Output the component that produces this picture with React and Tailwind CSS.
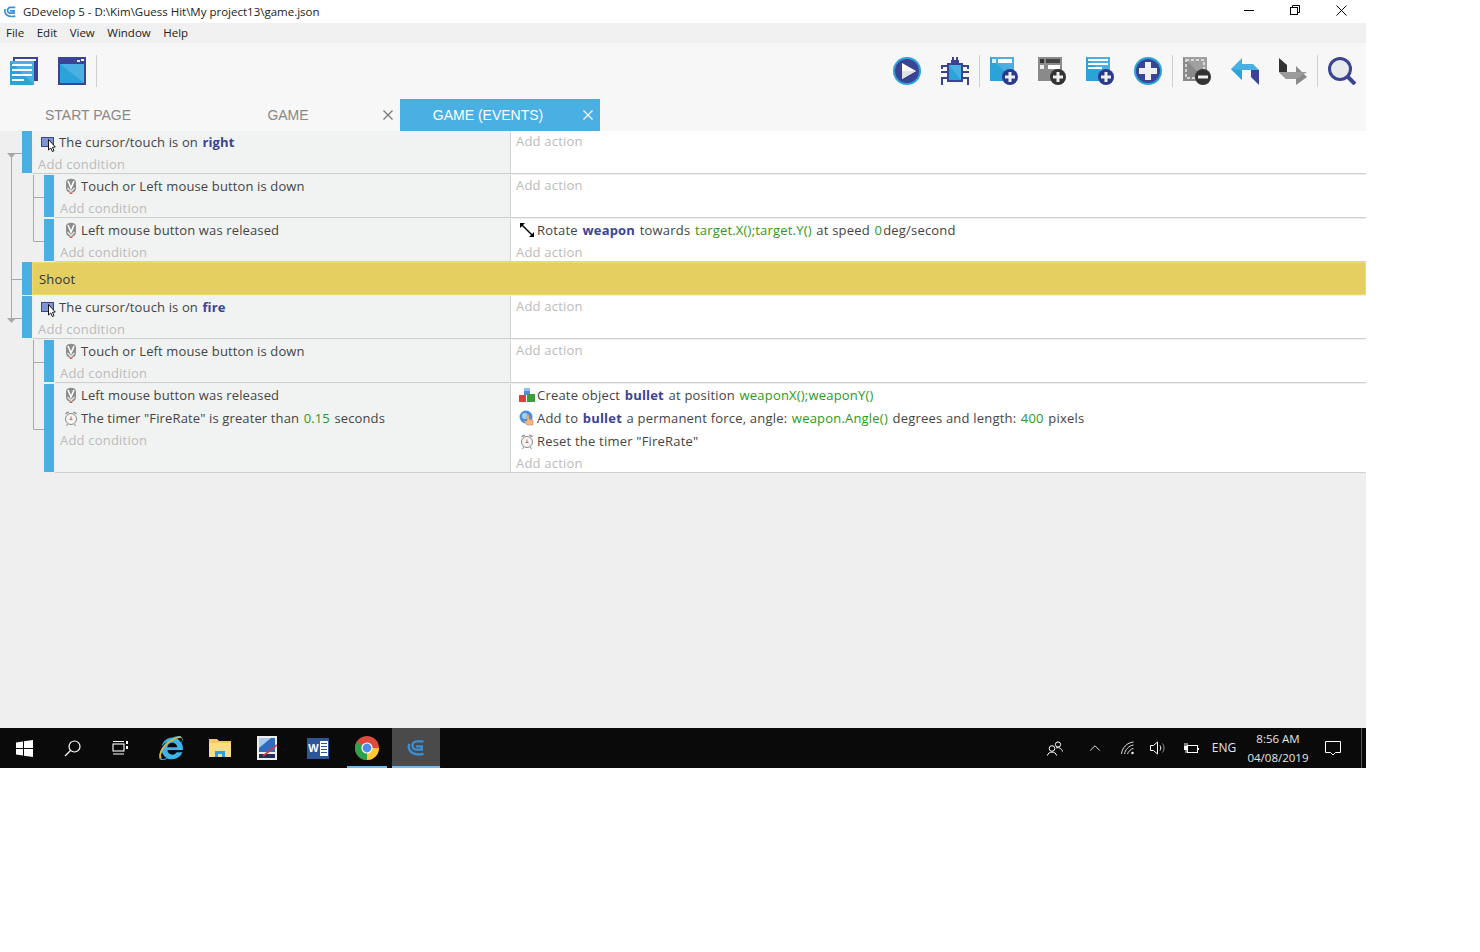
import { ChevronUp } from "lucide-react";
import { FaInternetExplorer } from "react-icons/fa";

const NAVY = "#3b4494";
const BLUE = "#29a3d8";
const SKY = "#4ab0e4";

function GdLogo({ size = 14, color = "#3b8fd6" }) {
  return (
    <svg width={size} height={size} viewBox="0 0 24 24" fill="none" stroke={color} strokeWidth="2.8">
      <path d="M4 7 C1 15 8 22 21 19" />
      <path d="M21 4 H13 C6 4 6 14 13 14 H19 V10 H12" />
    </svg>
  );
}

/* toolbar icons, drawn on a 28 box */
function PlayIcon() {
  return (
    <svg width="28" height="28" viewBox="0 0 28 28">
      <circle cx="14" cy="14" r="14" fill={BLUE} />
      <circle cx="14" cy="14" r="12" fill={NAVY} />
      <path d="M9 6 L23 14 L9 22 Z" fill="#fff" />
      <path d="M9 14 H23 L9 22 Z" fill="#dfe3e8" />
    </svg>
  );
}

function BugIcon() {
  return (
    <svg width="28" height="28" viewBox="0 0 28 28">
      <g fill="none" stroke={NAVY} strokeWidth="2">
        <path d="M12 0 V5 M16 0 V5" />
        <path d="M6 9 H1 V12 M6 15 H0 M6 21 H1 V28" />
        <path d="M22 9 H27 V12 M22 15 H28 M22 21 H27 V28" />
      </g>
      <rect x="10" y="3" width="8" height="3" fill={NAVY} />
      <rect x="6" y="6" width="16" height="19" fill={NAVY} />
      <rect x="8" y="8" width="12" height="15" fill={BLUE} />
      <path d="M8 8 h12 v15z" fill={SKY} />
    </svg>
  );
}

function Badge({ bg, minus }) {
  return (
    <g>
      <circle cx="20" cy="20" r="8" fill={bg} />
      <rect x="15" y="18.5" width="10" height="3" fill="#eef0f2" />
      {!minus && <rect x="18.5" y="15" width="3" height="10" fill="#eef0f2" />}
    </g>
  );
}

function SceneAddIcon() {
  return (
    <svg width="28" height="28" viewBox="0 0 28 28">
      <rect x="0" y="0" width="24" height="24" fill={BLUE} />
      <path d="M0 0 h24 v24z" fill={SKY} />
      <rect x="2" y="2" width="4" height="4" fill="#dfeefa" />
      <rect x="8" y="2" width="14" height="4" fill="#fff" />
      <Badge bg="#2b3a8f" />
    </svg>
  );
}

function ExternalAddIcon() {
  return (
    <svg width="28" height="28" viewBox="0 0 28 28">
      <rect x="0" y="0" width="24" height="24" fill="#8a8a8a" />
      <rect x="2" y="2" width="4" height="4" fill="#333" />
      <rect x="8" y="2" width="14" height="4" fill="#444" />
      <rect x="2" y="8" width="4" height="4" fill="#eee" />
      <rect x="10" y="8" width="12" height="4" fill="#fff" />
      <Badge bg="#333" />
    </svg>
  );
}

function ListAddIcon() {
  return (
    <svg width="28" height="28" viewBox="0 0 28 28">
      <rect x="0" y="0" width="24" height="24" fill={BLUE} />
      <path d="M0 0 h24 v24z" fill={SKY} />
      <rect x="2" y="2" width="20" height="2" fill="#fff" />
      <rect x="2" y="6" width="20" height="2" fill="#fff" />
      <rect x="2" y="10" width="14" height="2" fill="#fff" />
      <Badge bg="#2b3a8f" />
    </svg>
  );
}

function PlusCircleIcon() {
  return (
    <svg width="28" height="28" viewBox="0 0 28 28">
      <circle cx="14" cy="14" r="14" fill={BLUE} />
      <circle cx="14" cy="14" r="12" fill={NAVY} />
      <path d="M11 5 h6 v6 h6 v6 h-6 v6 h-6 v-6 h-6 v-6 h6z" fill="#eef0f2" />
    </svg>
  );
}

function DeleteIcon() {
  return (
    <svg width="28" height="28" viewBox="0 0 28 28">
      <rect x="0" y="0" width="24" height="24" fill="#8a8a8a" />
      <path d="M0 0 h24 v24z" fill="#a0a0a0" />
      <rect x="3" y="3" width="18" height="18" fill="none" stroke="#eee" strokeWidth="1.5" strokeDasharray="3 2" />
      <Badge bg="#333" minus />
    </svg>
  );
}

function UndoIcon() {
  return (
    <svg width="28" height="28" viewBox="0 0 28 28">
      <path d="M0 12 L11 1 V7 H22 L28 13 H11 V23 Z" fill={SKY} />
      <path d="M0 12 L11 23 V13 Z" fill={BLUE} />
      <path d="M20 13 H28 V28 L20 20 Z" fill={NAVY} />
    </svg>
  );
}

function RedoIcon() {
  return (
    <svg width="28" height="28" viewBox="0 0 28 28">
      <path d="M0 1 L8 8 V15 H0 Z" fill="#333" />
      <path d="M0 15 H17 V9 L28 20 L17 28 V22 H7 Z" fill="#8a8a8a" />
      <path d="M17 22 H7 L0 15 H28 Z" fill="#9b9b9b" />
    </svg>
  );
}

function SearchIcon() {
  return (
    <svg width="28" height="28" viewBox="0 0 28 28">
      <circle cx="12" cy="12" r="10.5" fill="#e8e9eb" stroke={NAVY} strokeWidth="3" />
      <path d="M19 19 L27 27" stroke={NAVY} strokeWidth="4" />
    </svg>
  );
}

function DocsIcon() {
  return (
    <svg width="28" height="28" viewBox="0 0 28 28">
      <rect x="3" y="0" width="25" height="24" fill={NAVY} />
      <rect x="5" y="2" width="21" height="2" fill="#fff" />
      <rect x="0" y="4" width="24" height="24" fill={BLUE} />
      <path d="M0 4 h24 v24z" fill={SKY} />
      <rect x="2" y="7" width="20" height="2" fill="#fff" />
      <rect x="2" y="12" width="20" height="2" fill="#fff" />
      <rect x="2" y="17" width="20" height="2" fill="#fff" />
      <rect x="2" y="22" width="12" height="2" fill="#fff" />
    </svg>
  );
}

function SceneIcon() {
  return (
    <svg width="28" height="28" viewBox="0 0 28 28">
      <rect x="0" y="0" width="28" height="28" fill={NAVY} />
      <rect x="2" y="7" width="24" height="19" fill={BLUE} />
      <path d="M2 7 h24 v19z" fill={SKY} />
      <rect x="19" y="3" width="3" height="2" fill="#dfeefa" />
      <rect x="23" y="2" width="3" height="2" fill="#fff" />
    </svg>
  );
}

/* event sheet icons, 16 box */
function CursorIcon() {
  return (
    <svg width="16" height="16" viewBox="0 0 16 16" className="overflow-visible">
      <rect x="0.5" y="3.5" width="12" height="9" fill="#7d93d2" stroke={NAVY} />
      <path d="M7.5 5.5 V16 L9.8 14 L11.3 17.5 L13 16.7 L11.5 13.3 L14.3 13 Z" fill="#fff" stroke="#000" strokeWidth="0.9" />
    </svg>
  );
}

function MouseIcon() {
  return (
    <svg width="16" height="16" viewBox="0 0 16 16">
      <path d="M3 4 C3 -0.5 13 -0.5 13 4 V10 C13 13 11 14.5 8 14.5 C5 14.5 3 13 3 10 Z" fill="#8c8c8c" />
      <path d="M5 3 L8 10 L11 3" fill="none" stroke="#fff" strokeWidth="1.6" />
      <path d="M4.5 10 L8 13.5 L11.5 10" fill="none" stroke="#e6e6e6" strokeWidth="1.4" />
      <path d="M6 14.5 h4 l-1 1.5 h-2z" fill="#e2574c" />
    </svg>
  );
}

function TimerIcon() {
  return (
    <svg width="16" height="16" viewBox="0 0 16 16" fill="none">
      <circle cx="8" cy="9" r="5.5" fill="#f5f5f5" stroke="#8c8c8c" />
      <path d="M8 6.5 V9.5 M6.5 9.5 H9.5" stroke="#c96a5c" />
      <path d="M2.5 4 C3 2 5 1.5 6 2.5 Z M13.5 4 C13 2 11 1.5 10 2.5 Z" fill="#bbb" stroke="#8c8c8c" strokeWidth="0.7" />
      <path d="M4.5 14 L3.5 16 M11.5 14 L12.5 16" stroke="#8c8c8c" />
    </svg>
  );
}

function RotateIcon() {
  return (
    <svg width="16" height="16" viewBox="0 0 16 16" stroke="#000" strokeWidth="1.4" fill="#000">
      <path d="M2 2 L14 14" />
      <path d="M1 1 H6 L1 6 Z M15 15 H10 L15 10 Z" stroke="none" />
    </svg>
  );
}

function CreateIcon() {
  return (
    <svg width="16" height="16" viewBox="0 0 16 16">
      <rect x="5" y="1" width="6" height="7" fill="#4a90d9" />
      <path d="M5 1 h6 v3 h-6z" fill="#8cc0ee" />
      <rect x="0" y="8" width="7" height="7" fill="#d8403a" />
      <rect x="8" y="7" width="8" height="8" fill="#3f9e3a" />
    </svg>
  );
}

function ForceIcon() {
  return (
    <svg width="16" height="16" viewBox="0 0 16 16" className="overflow-visible">
      <circle cx="7" cy="7" r="6.5" fill="#4f8fd8" />
      <circle cx="6" cy="6" r="3" fill="#a8d0f2" />
      <path d="M8 5 h2 v4 l4 1 v5 h-6 l-3 -4 h3z" fill="#f2b98a" stroke="#c27b45" strokeWidth="0.5" />
    </svg>
  );
}

const ICONS = {
  cursor: CursorIcon,
  mouse: MouseIcon,
  timer: TimerIcon,
  rotate: RotateIcon,
  create: CreateIcon,
  force: ForceIcon,
};

const obj = t => ({ t, k: "obj" });
const num = t => ({ t, k: "num" });

const EVENTS = [
  {
    indent: 0,
    h: "h-[44px]",
    conditions: [{ icon: "cursor", parts: ["The cursor/touch is on ", obj("right")] }],
    actions: [],
  },
  {
    indent: 1,
    h: "h-[44px]",
    conditions: [{ icon: "mouse", parts: ["Touch or Left mouse button is down"] }],
    actions: [],
  },
  {
    indent: 1,
    h: "h-[43px]",
    tight: true,
    conditions: [{ icon: "mouse", parts: ["Left mouse button was released"] }],
    actions: [
      { icon: "rotate", parts: ["Rotate ", obj("weapon"), " towards ", num("target.X();target.Y()"), " at speed ", num("0"), "deg/second"] },
    ],
  },
  { group: "Shoot" },
  {
    indent: 0,
    h: "h-[44px]",
    conditions: [{ icon: "cursor", parts: ["The cursor/touch is on ", obj("fire")] }],
    actions: [],
  },
  {
    indent: 1,
    h: "h-[44px]",
    conditions: [{ icon: "mouse", parts: ["Touch or Left mouse button is down"] }],
    actions: [],
  },
  {
    indent: 1,
    h: "h-[90px]",
    conditions: [
      { icon: "mouse", parts: ["Left mouse button was released"] },
      { icon: "timer", parts: ['The timer "FireRate" is greater than ', num("0.15"), " seconds"] },
    ],
    actions: [
      { icon: "create", parts: ["Create object ", obj("bullet"), " at position ", num("weaponX();weaponY()")] },
      { icon: "force", parts: ["Add to ", obj("bullet"), " a permanent force, angle: ", num("weapon.Angle()"), " degrees and length: ", num("400"), " pixels"] },
      { icon: "timer", parts: ['Reset the timer "FireRate"'] },
    ],
  },
];

function Instruction({ icon, parts }) {
  const Icon = ICONS[icon];
  return (
    <div className="flex items-center h-[22px] mb-px pl-[3px] text-[#444] whitespace-pre">
      <span className="shrink-0 mr-[2px]">
        <Icon />
      </span>
      <span className="pt-[2px] flex">
        {parts.map((p, i) =>
          typeof p === "string" ? (
            <span key={i} className={i > 0 ? "ml-px" : ""}>{p}</span>
          ) : (
            <span key={i} className={`${i > 0 ? "ml-px " : ""}${p.k === "obj" ? "font-bold text-[#3b4494]" : "text-[#2c9a1a]"}`}>
              {p.t}
            </span>
          )
        )}
      </span>
    </div>
  );
}

function EventRow({ ev }) {
  return (
    <div className={`flex ${ev.h} ${ev.indent ? "ml-[44px]" : "ml-[22px]"}`}>
      <div className={`w-[10px] shrink-0 bg-[#4ab0e4] ${ev.tight ? "mb-px" : "mb-[2px]"}`} />
      <div className={`flex flex-1 ml-px border-b border-[#cfcfcf] ${ev.tight ? "" : "mb-px"}`}>
        <div className={`shrink-0 pl-[5px] bg-[#f1f3f3] border-r border-[#d4d4d4] ${ev.indent ? "w-[456px]" : "w-[478px]"}`}>
          <div className="tracking-[0.13px]">
            {ev.conditions.map((c, i) => (
              <Instruction key={i} {...c} />
            ))}
          </div>
          <div className="h-[20px] leading-[20px] text-[#bbbbbb]">Add condition</div>
        </div>
        <div className="flex-1 pl-[5px] bg-white">
          {ev.actions.map((a, i) => (
            <Instruction key={i} {...a} />
          ))}
          <div className="h-[20px] leading-[20px] text-[#bbbbbb]">Add action</div>
        </div>
      </div>
    </div>
  );
}

function TreeLines() {
  return (
    <svg className="absolute left-0 top-0" width="50" height="340" stroke="#a8a8a8" fill="none">
      <path d="M11.5 24 V188 M11.5 22.5 H22 M11.5 148.5 H22 M11.5 187.5 H22" />
      <path d="M33.5 44 V110 M33.5 66.5 H44 M33.5 110.5 H44" />
      <path d="M33.5 209 V298 M33.5 231.5 H44 M33.5 298.5 H44" />
      <path d="M7 22 H16 L11.5 27 Z M7 187 H16 L11.5 192 Z" fill="#a8a8a8" stroke="none" />
    </svg>
  );
}

function ToolButton({ children }) {
  return <div className="w-12 h-7 flex justify-center items-center shrink-0">{children}</div>;
}

const Sep = () => <div className="w-px h-8 bg-[#d0d0d0] shrink-0" />;

function Tab({ label, active, closable }) {
  return (
    <div className={`w-[200px] h-8 flex items-center ${active ? "bg-[#4ab0e4] text-white" : "text-[#888]"}`}>
      <span className="w-[176px] text-center">{label}</span>
      {closable && (
        <svg width="10" height="10" viewBox="0 0 10 10" className="ml-[7px]" stroke={active ? "#fff" : "#777"} strokeWidth="1.2">
          <path d="M0.5 0.5 L9.5 9.5 M9.5 0.5 L0.5 9.5" />
        </svg>
      )}
    </div>
  );
}

function TaskIcon({ children, active, underline }) {
  return (
    <div className={`relative w-12 h-10 flex items-center justify-center shrink-0 ${active ? "bg-[#4a4a4a]" : ""}`}>
      {children}
      {underline && <div className={`absolute bottom-0 h-[2px] bg-[#76b9ed] ${active ? "inset-x-0" : "inset-x-1"}`} />}
    </div>
  );
}

function Taskbar() {
  return (
    <div className="h-10 shrink-0 bg-[#0a0a0a] flex items-center text-white">
      <TaskIcon>
        <svg width="17" height="17" viewBox="0 0 17 17" fill="#fff">
          <path d="M0 2.4 L7 1.4 V8 H0 Z M8 1.3 L17 0 V8 H8 Z M0 9 H7 V15.6 L0 14.6 Z M8 9 H17 V17 L8 15.7 Z" />
        </svg>
      </TaskIcon>
      <TaskIcon>
        <svg width="17" height="17" viewBox="0 0 17 17" fill="none" stroke="#fff" strokeWidth="1.2">
          <circle cx="10.5" cy="6.5" r="5.5" />
          <path d="M6.5 10.5 L1 16" />
        </svg>
      </TaskIcon>
      <TaskIcon>
        <svg width="17" height="16" viewBox="0 0 17 16" fill="none" stroke="#fff" strokeWidth="1.1">
          <rect x="1" y="4" width="11" height="7" />
          <path d="M1 1.5 H12 M1 14 H12" />
          <path d="M15 1 V4 M15 6 V9" strokeWidth="2" />
        </svg>
      </TaskIcon>
      <div className="flex ml-[3px] gap-px">
        <TaskIcon>
          <span className="relative">
            <FaInternetExplorer size={24} color="#3cb4e6" />
            <svg className="absolute left-0 top-0" width="24" height="24" viewBox="0 0 24 24" fill="none" stroke="#e3b52a" strokeWidth="1.4">
              <path d="M2 22 C-1 16 8 3 22 1" />
            </svg>
          </span>
        </TaskIcon>
        <TaskIcon>
          <svg width="22" height="18" viewBox="0 0 22 18">
            <path d="M0 0 H8 L10 2 H22 V18 H0 Z" fill="#f3c95a" />
            <rect x="0" y="4" width="22" height="14" fill="#fbdd83" />
            <path d="M6 18 V12 H16 V18 H13 V15 H9 V18 Z" fill="#2d9fe0" />
          </svg>
        </TaskIcon>
        <TaskIcon>
          <svg width="20" height="24" viewBox="0 0 20 24" className="mr-1">
            <rect width="20" height="24" fill="#eee" />
            <rect x="2" y="2" width="16" height="14" fill="#2f6cc0" />
            <path d="M2 2 H14 L2 12 Z" fill="#a6cdf0" />
            <rect x="2" y="18" width="16" height="4" fill="#222d55" />
            <path d="M20 9 L6 20" stroke="#d43c3c" strokeWidth="1.6" />
          </svg>
        </TaskIcon>
        <TaskIcon>
          <div className="w-[22px] h-[21px] bg-[#2b579a] flex items-center">
            <div className="w-[13px] text-center text-white text-[11px] font-bold font-['Liberation_Sans',sans-serif]">W</div>
            <div className="w-[8px] h-[15px] bg-white flex flex-col justify-around py-px px-px">
              <div className="h-px bg-[#2b579a]" />
              <div className="h-px bg-[#2b579a]" />
              <div className="h-px bg-[#2b579a]" />
              <div className="h-px bg-[#2b579a]" />
            </div>
          </div>
        </TaskIcon>
        <TaskIcon underline>
          <svg width="24" height="24" viewBox="0 0 24 24">
            <circle cx="12" cy="12" r="12" fill="#dd4b3e" />
            <path d="M12 12 L1.6 6 A12 12 0 0 0 12 24 Z" fill="#2fa14a" />
            <path d="M12 12 H24 A12 12 0 0 1 12 24 Z" fill="#fcc934" />
            <circle cx="12" cy="12" r="5.6" fill="#fff" />
            <circle cx="12" cy="12" r="4.4" fill="#4a8ff0" />
          </svg>
        </TaskIcon>
        <TaskIcon active underline>
          <GdLogo size={20} />
        </TaskIcon>
      </div>
      <div className="ml-auto flex items-center h-10 text-xs text-[#e6e6e6]">
        <div className="w-10 flex justify-center">
          <svg width="16" height="15" viewBox="0 0 16 15" fill="none" stroke="#fff">
            <circle cx="5" cy="7.5" r="2.8" />
            <path d="M0.5 14.5 C1 10 9 10 9.5 14.5" />
            <circle cx="11" cy="3.5" r="2.6" />
            <path d="M9 7 C11 6 15 7 15.5 10.5" />
          </svg>
        </div>
        <div className="w-10 flex justify-center">
          <ChevronUp size={18} strokeWidth={1.2} color="#fff" />
        </div>
        <div className="w-[26px] flex justify-center">
          <svg width="14" height="14" viewBox="0 0 14 14" fill="none" stroke="#ddd">
            <path d="M0.5 13 C1 7 6 1.5 12.5 1 M3.5 13 C4 9 8 4.5 12.5 4 M6.5 13 C7 11 10 7.5 12.5 7.5" />
            <circle cx="11.5" cy="12" r="1.2" fill="#fff" stroke="none" />
          </svg>
        </div>
        <div className="w-[34px] flex justify-center">
          <svg width="16" height="14" viewBox="0 0 16 14" fill="none" stroke="#fff">
            <path d="M0.5 4.5 H3.5 L7.5 1 V13 L3.5 9.5 H0.5 Z" />
            <path d="M10 4.5 C11 6 11 8 10 9.5" />
            <path d="M12.5 2.5 C14.5 5 14.5 9 12.5 11.5" stroke="#999" />
          </svg>
        </div>
        <div className="w-8 flex justify-center">
          <svg width="16" height="11" viewBox="0 0 16 11" fill="none" stroke="#fff">
            <rect x="4.5" y="2.5" width="10" height="7" />
            <path d="M15.5 5 V7" />
            <rect x="1" y="3" width="4" height="4" fill="#fff" stroke="none" />
            <path d="M2 0 V3 M4 0 V3 M3 7 V10" />
          </svg>
        </div>
        <div className="w-[34px] text-center">ENG</div>
        <div className="w-[74px] text-center leading-[19px] text-[11.5px]">
          <div>8:56 AM</div>
          <div>04/08/2019</div>
        </div>
        <div className="w-9 flex justify-center">
          <svg width="16" height="15" viewBox="0 0 16 15" fill="none" stroke="#fff">
            <path d="M0.5 0.5 H15.5 V11.5 H10.5 L8 14 L5.5 11.5 H0.5 Z" />
          </svg>
        </div>
        <div className="w-[15px] h-10 flex justify-end pr-[4px]">
          <div className="w-px h-10 bg-[#555]" />
        </div>
      </div>
    </div>
  );
}

export default function App() {
  return (
    <div className="w-[1480px] h-[952px] bg-white overflow-hidden">
      <div className="w-[1366px] h-[768px] flex flex-col font-['Open_Sans','Noto_Sans',sans-serif] text-[13px]">
        <div className="h-[23px] shrink-0 bg-white flex items-center pl-[3px] text-[11.5px] text-[#222]">
          <GdLogo size={14} />
          <span className="ml-[6px]">GDevelop 5 - D:\Kim\Guess Hit\My project13\game.json</span>
          <div className="ml-auto flex items-center mb-[3px]">
            <div className="w-[46px] flex justify-center">
              <div className="w-[10px] h-px bg-black" />
            </div>
            <div className="w-[46px] flex justify-center">
              <svg width="10" height="10" viewBox="0 0 10 10" fill="none" stroke="#000">
                <path d="M2.5 2.5 V0.5 H9.5 V7.5 H7.5" />
                <rect x="0.5" y="2.5" width="7" height="7" />
              </svg>
            </div>
            <div className="w-[46px] flex justify-center mr-[2px]">
              <svg width="11" height="11" viewBox="0 0 11 11" stroke="#000">
                <path d="M0.5 0.5 L10.5 10.5 M10.5 0.5 L0.5 10.5" />
              </svg>
            </div>
          </div>
        </div>

        <div className="h-5 shrink-0 bg-[#f0f0f0] flex items-center pl-[6px] gap-[12.5px] text-[11.5px] text-[#222]">
          <span>File</span>
          <span>Edit</span>
          <span>View</span>
          <span>Window</span>
          <span>Help</span>
        </div>

        <div className="h-[56px] shrink-0 bg-[#f7f7f7] flex items-center">
          <ToolButton><DocsIcon /></ToolButton>
          <ToolButton><SceneIcon /></ToolButton>
          <Sep />
          <div className="ml-auto flex items-center">
            <ToolButton><PlayIcon /></ToolButton>
            <ToolButton><BugIcon /></ToolButton>
            <Sep />
            <ToolButton><SceneAddIcon /></ToolButton>
            <ToolButton><ExternalAddIcon /></ToolButton>
            <ToolButton><ListAddIcon /></ToolButton>
            <ToolButton><PlusCircleIcon /></ToolButton>
            <Sep />
            <ToolButton><DeleteIcon /></ToolButton>
            <ToolButton><UndoIcon /></ToolButton>
            <ToolButton><RedoIcon /></ToolButton>
            <Sep />
            <ToolButton><SearchIcon /></ToolButton>
          </div>
        </div>

        <div className="h-8 shrink-0 bg-[#f7f7f7] flex font-['Liberation_Sans',sans-serif] text-sm">
          <Tab label="START PAGE" />
          <Tab label="GAME" closable />
          <Tab label="GAME (EVENTS)" active closable />
        </div>

        <div className="relative flex-1 bg-[#efefef] tracking-[0.2px]">
          <TreeLines />
          {EVENTS.map((ev, i) =>
            ev.group ? (
              <div key={i} className="flex h-[34px] ml-[22px]">
                <div className="w-[10px] bg-[#4ab0e4] mb-px" />
                <div className="flex-1 mb-px pl-[6px] pt-[2px] flex items-center bg-[#e5cf60] border border-[#f0da6a] text-[#333]">{ev.group}</div>
              </div>
            ) : (
              <EventRow key={i} ev={ev} />
            )
          )}
        </div>

        <Taskbar />
      </div>
    </div>
  );
}
